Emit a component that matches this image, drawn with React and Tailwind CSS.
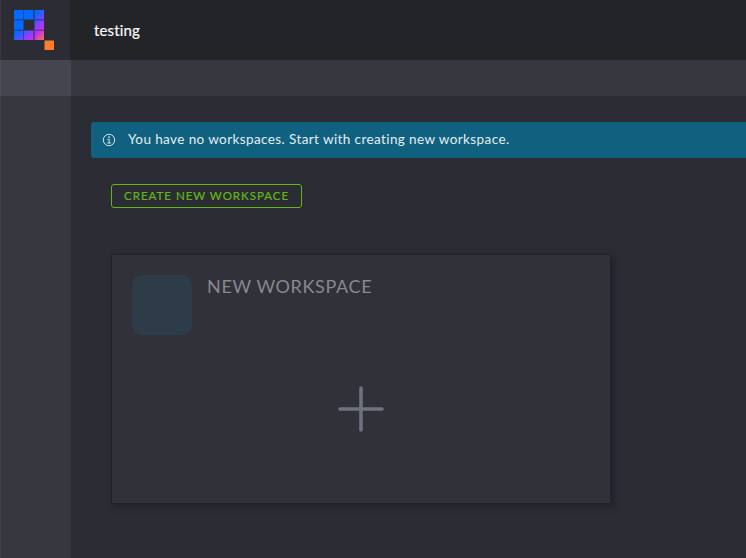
const tiles = [
  [14, 10], [24, 10], [35, 10],
  [14, 20.5], [35, 20.5],
  [14, 31], [24, 31], [35, 31],
];

function Logo() {
  return (
    <svg width="70" height="60" viewBox="0 0 70 60" aria-label="Logo">
      <defs>
        <linearGradient id="tiles" gradientUnits="userSpaceOnUse" x1="15" y1="11" x2="43" y2="39">
          <stop offset="0.42" stopColor="#0469ff" />
          <stop offset="0.72" stopColor="#a337ff" />
          <stop offset="0.82" stopColor="#c436ea" />
          <stop offset="1" stopColor="#f26a55" />
        </linearGradient>
      </defs>
      <path d="M14 10H44V40H14ZM24 20V30H34V20Z" fill="url(#tiles)" fillRule="evenodd" opacity="0.5" />
      {tiles.map(([x, y]) => (
        <rect key={`${x}-${y}`} x={x} y={y} width="9" height="9" fill="url(#tiles)" />
      ))}
      <rect x="44.5" y="40.5" width="9.5" height="9.5" fill="#ff7b30" />
    </svg>
  );
}

function InfoIcon() {
  return (
    <svg width="14" height="14" viewBox="0 0 14 14" fill="none" stroke="#d5e3eb" strokeWidth="1">
      <circle cx="7" cy="7" r="5.7" />
      <circle cx="7" cy="4.1" r="0.9" fill="#d5e3eb" stroke="none" />
      <path d="M5.5 6.3H7.2V10M5.2 10H8.9" />
    </svg>
  );
}

export default function App() {
  return (
    <div className="flex h-[558px] w-[746px] flex-col overflow-hidden bg-[#2c2c35] font-['Lato','Liberation_Sans',sans-serif]">
      <header className="flex h-[60px] shrink-0 bg-[#222428]">
        <div className="w-[70px] border-l border-[#393942] bg-[#2c2c35]">
          <div className="-ml-px"><Logo /></div>
        </div>
        <h1 className="ml-6 mt-[19px] whitespace-nowrap text-[15px] leading-[22px] font-normal tracking-[0.13px] text-[#f8f8f8] [-webkit-text-stroke:0.2px]">testing</h1>
      </header>
      <div className="flex h-9 shrink-0 bg-[#373740]">
        <div className="w-[71px] border-l border-[#4d4d58] bg-[#454550]" />
      </div>
      <div className="flex min-h-0 flex-1">
        <aside className="w-[71px] shrink-0 border-l border-[#41414a] bg-[#373740]" />
        <main className="min-w-0 flex-1 pl-5 pt-[26px]">
          <div className="flex h-9 items-center rounded-l-[3px] bg-[#10607f] pl-[11px]">
            <InfoIcon />
            <p className="mb-[2px] ml-[12px] whitespace-nowrap text-[13.5px] leading-5 tracking-[0.4px] text-[#e5eef2]">You have no workspaces. Start with creating new workspace.</p>
          </div>
          <button className="ml-5 mt-[26px] flex h-6 w-[191px] items-center rounded-[3px] border border-[#61b715] pl-3 text-[11.5px] leading-4 tracking-[1px] whitespace-nowrap text-[#61b715] [-webkit-text-stroke:0.2px]">CREATE NEW WORKSPACE</button>
          <section className="ml-5 mt-[46px] flex h-[250px] w-[500px] flex-col border border-[#202129] bg-[#31313a] px-5 pt-5 shadow-[3px_3px_6px_#1f222a]">
            <div className="flex">
              <div className="size-[60px] rounded-[10px] bg-[#2e3c4a]" />
              <h2 className="-mt-px ml-[15px] text-[18px] leading-6 font-normal tracking-[0.64px] whitespace-nowrap text-[#88888f]">NEW WORKSPACE</h2>
            </div>
            <svg className="mx-auto mt-[50px] shrink-0" width="48" height="48" viewBox="0 0 48 48" fill="none" stroke="#6c737e" strokeWidth="3.6" strokeLinecap="round">
              <path d="M24 3V45M3 24H45" />
            </svg>
          </section>
        </main>
      </div>
    </div>
  );
}
